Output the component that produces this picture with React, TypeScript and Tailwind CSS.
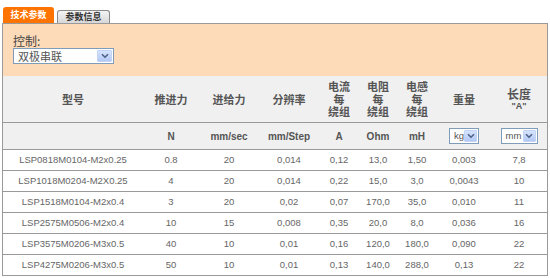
import React from "react";

const cols = "grid grid-cols-[140px_56px_60px_60px_40px_38px_40px_54px_56px]";

const rows = [
  ["LSP0818M0104-M2x0.25", "0.8", "20", "0,014", "0,12", "13,0", "1,50", "0,003", "7,8"],
  ["LSP1018M0204-M2X0.25", "4", "20", "0,014", "0,22", "15,0", "3,0", "0,0043", "10"],
  ["LSP1518M0104-M2x0.4", "3", "20", "0,02", "0,07", "170,0", "35,0", "0,010", "11"],
  ["LSP2575M0506-M2x0.4", "10", "15", "0,008", "0,35", "20,0", "8,0", "0,036", "16"],
  ["LSP3575M0206-M3x0.5", "40", "10", "0,01", "0,16", "120,0", "180,0", "0,090", "22"],
  ["LSP4275M0206-M3x0.5", "50", "10", "0,01", "0,13", "140,0", "288,0", "0,13", "22"],
];

const cjk = { fontFamily: '"Noto Sans CJK SC", "Liberation Sans", sans-serif' };
const lat = { fontFamily: '"Liberation Sans", Arial, sans-serif' };

function Arrow({ w = 14 }: { w?: number }) {
  return (
    <div
      className="h-full flex items-center justify-center bg-gradient-to-b from-[#d6e3fd] to-[#b3c9f5] border border-[#c3d3f5] rounded-[1px]"
      style={{ width: w }}
    >
      <svg width="8" height="6" viewBox="0 0 8 6">
        <path d="M1 1.2 L4 4.2 L7 1.2" fill="none" stroke="#4d6185" strokeWidth="1.6" />
      </svg>
    </div>
  );
}

function Select({ text, w, cjkText }: { text: string; w: number; cjkText?: boolean }) {
  return (
    <div
      className="h-[16px] border border-[#7f9db9] bg-white flex items-stretch p-[1px]"
      style={{ width: w }}
    >
      <div
        className={`flex-1 flex items-center pl-[3px] text-[#555] ${cjkText ? "text-[11px]" : "text-[9.5px]"}`}
        style={cjkText ? cjk : lat}
      >
        {text}
      </div>
      <Arrow w={cjkText ? 15 : 13} />
    </div>
  );
}

function Stack({ a }: { a: string }) {
  return (
    <div className="flex flex-col items-center justify-center">
      <span className="block leading-[12.5px]">{a}</span>
      <span className="block leading-[12.5px]">每</span>
      <span className="block leading-[12.5px]">绕组</span>
    </div>
  );
}

export default function App() {
  return (
    <div className="w-[550px] h-[278px] bg-white overflow-hidden">
      {/* tabs */}
      <div className="flex items-end gap-[3px] pl-[3px] pt-[7px] h-[23px]">
        <div
          className="w-[51px] h-[16px] rounded-t-[3px] bg-[#ff7400] flex items-center justify-center text-white text-[9px] font-bold"
          style={cjk}
        >
          技术参数
        </div>
        <div
          className="w-[53px] h-[13px] rounded-t-[3px] border border-b-0 border-[#8a8a8a] bg-gradient-to-b from-[#f4f4f4] to-[#d8d8d8] flex items-center justify-center text-[#333] text-[9px] font-bold"
          style={cjk}
        >
          参数信息
        </div>
      </div>
      {/* panel */}
      <div className="ml-[2px] w-[546px] border-l border-r border-t border-[#9a9a9a]">
        <div className="h-[52px] bg-[#fddab8] pl-[10px] pt-[9px]">
          <div className="text-[12px] text-[#444] leading-[15px]" style={cjk}>
            控制:
          </div>
          <Select text="双极串联" w={101} cjkText />
        </div>
        {/* header */}
        <div
          className={`${cols} h-[47px] bg-[#f0f0f0] border-b border-[#999] text-[#555] font-bold text-[11px] leading-[12.5px]`}
          style={cjk}
        >
          <div className="flex items-center justify-center">型号</div>
          <div className="flex items-center justify-center">推进力</div>
          <div className="flex items-center justify-center">进给力</div>
          <div className="flex items-center justify-center">分辨率</div>
          <Stack a="电流" />
          <Stack a="电阻" />
          <Stack a="电感" />
          <div className="flex items-center justify-center">重量</div>
          <div className="flex flex-col items-center justify-center">
            <span className="block text-[12px] leading-[14px]">长度</span>
            <span className="block text-[9px] leading-[11px]" style={lat}>
              "A"
            </span>
          </div>
        </div>
        {/* units */}
        <div
          className={`${cols} h-[27px] bg-[#f0f0f0] border-b border-[#999] text-[#555] font-bold text-[10px]`}
          style={lat}
        >
          <div />
          <div className="flex items-center justify-center">N</div>
          <div className="flex items-center justify-center">mm/sec</div>
          <div className="flex items-center justify-center">mm/Step</div>
          <div className="flex items-center justify-center">A</div>
          <div className="flex items-center justify-center">Ohm</div>
          <div className="flex items-center justify-center">mH</div>
          <div className="flex items-center justify-center font-normal">
            <Select text="kg" w={30} />
          </div>
          <div className="flex items-center justify-center font-normal">
            <Select text="mm" w={37} />
          </div>
        </div>
        {/* data */}
        {rows.map((r, i) => (
          <div
            key={i}
            className={`${cols} h-[21px] bg-white border-b border-[#999] text-[#666] text-[9.5px]`}
            style={lat}
          >
            {r.map((c, j) => (
              <div key={j} className="flex items-center justify-center">
                {c}
              </div>
            ))}
          </div>
        ))}
      </div>
    </div>
  );
}
